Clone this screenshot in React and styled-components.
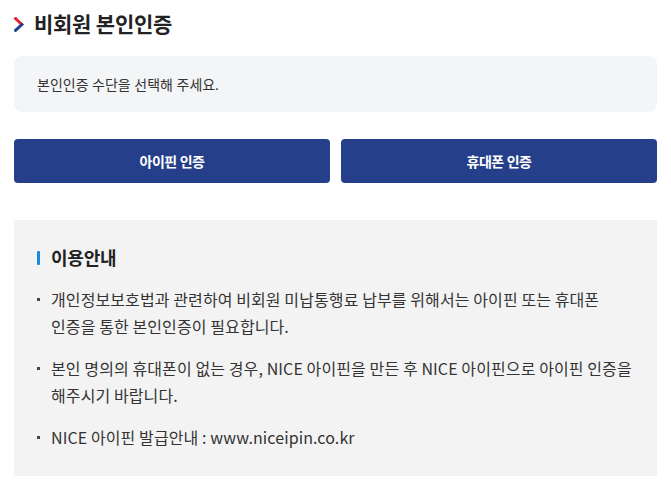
import React from "react";
import styled, { createGlobalStyle } from "styled-components";

const GlobalStyle = createGlobalStyle`
  html, body { margin: 0; padding: 0; background: #ffffff; }
  body {
    font-family: "Lato", "Noto Sans CJK KR", "Noto Sans", sans-serif;
    color: #333333;
  }
  * { box-sizing: border-box; }
`;

const Page = styled.div`
  width: 671px;
  padding: 10px 14px 0 14px;
`;

const TitleRow = styled.h2`
  margin: 0;
  height: 28px;
  display: flex;
  align-items: center;
  gap: 10px;
  font-size: 21px;
  line-height: 28px;
  font-weight: 700;
  color: #222222;
  letter-spacing: -0.3px;
`;

const Chevron = styled.svg`
  width: 10px;
  height: 15px;
  flex: none;
`;

const InfoBox = styled.div`
  margin-top: 18px;
  height: 56px;
  padding: 0 23px;
  display: flex;
  align-items: center;
  background: #f4f5f6;
  border-radius: 8px;
  font-size: 14px;
  color: #333333;
  letter-spacing: 0;
`;

const ButtonRow = styled.div`
  margin-top: 27px;
  display: grid;
  grid-template-columns: 1fr 1fr;
  gap: 11px;
`;

const AuthButton = styled.button`
  height: 44px;
  border: none;
  border-radius: 4px;
  background: #263f8a;
  color: #ffffff;
  font-family: "Lato", "Noto Sans CJK KR", sans-serif;
  font-size: 14px;
  font-weight: 700;
  letter-spacing: -0.5px;
  cursor: pointer;
`;

const Guide = styled.section`
  margin-top: 37px;
  background: #f3f3f3;
  padding: 26px 23px 25px 23px;
`;

const GuideTitle = styled.h3`
  margin: 0;
  display: flex;
  align-items: center;
  gap: 11px;
  font-size: 18px;
  line-height: 24px;
  font-weight: 700;
  color: #222222;
  letter-spacing: -0.2px;
  &::before {
    content: "";
    width: 3px;
    height: 14px;
    background: #1a8ad8;
    border-radius: 1px;
  }
`;

const List = styled.ul`
  list-style: none;
  margin: 16px 0 0 0;
  padding: 0;
  display: flex;
  flex-direction: column;
  gap: 15px;
`;

const Item = styled.li`
  position: relative;
  padding-left: 14px;
  font-family: "Noto Sans CJK KR", sans-serif;
  font-size: 16px;
  line-height: 27px;
  color: #333333;
  letter-spacing: 0.1px;
  white-space: nowrap;
  &::before {
    content: "";
    position: absolute;
    left: 0;
    top: 12px;
    width: 3px;
    height: 3px;
    background: #444444;
  }
`;

export default function App() {
  return (
    <>
      <GlobalStyle />
      <Page>
        <TitleRow>
          <Chevron viewBox="0 0 10 15">
            <path d="M1.6 1.6 L7.8 7.5" stroke="#e1262e" strokeWidth="3" strokeLinecap="square" fill="none" />
            <path d="M7.8 7.5 L1.6 13.4" stroke="#1f4192" strokeWidth="3" strokeLinecap="square" fill="none" />
          </Chevron>
          비회원 본인인증
        </TitleRow>
        <InfoBox>본인인증 수단을 선택해 주세요.</InfoBox>
        <ButtonRow>
          <AuthButton type="button">아이핀 인증</AuthButton>
          <AuthButton type="button">휴대폰 인증</AuthButton>
        </ButtonRow>
        <Guide>
          <GuideTitle>이용안내</GuideTitle>
          <List>
            <Item>
              개인정보보호법과 관련하여 비회원 미납통행료 납부를 위해서는 아이핀 또는 휴대폰
              <br />
              인증을 통한 본인인증이 필요합니다.
            </Item>
            <Item>
              본인 명의의 휴대폰이 없는 경우, NICE 아이핀을 만든 후 NICE 아이핀으로 아이핀 인증을
              <br />
              해주시기 바랍니다.
            </Item>
            <Item>NICE 아이핀 발급안내 : www.niceipin.co.kr</Item>
          </List>
        </Guide>
      </Page>
    </>
  );
}
